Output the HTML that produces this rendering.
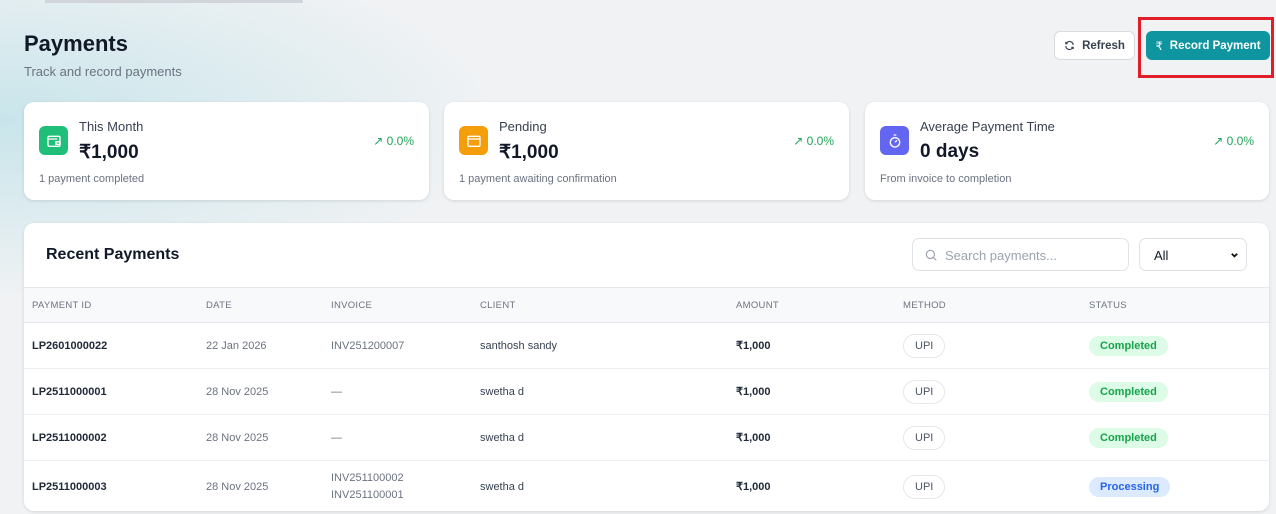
<!DOCTYPE html>
<html><head><meta charset="utf-8"><style>
*{box-sizing:border-box;margin:0;padding:0}
body{width:1276px;height:514px;overflow:hidden;font-family:"Liberation Sans",sans-serif;background:#f0f2f4;position:relative;color:#111827}
.bg{position:absolute;left:0;top:0;width:500px;height:300px;background:radial-gradient(ellipse at 0 40%,rgba(190,225,232,.8),rgba(240,242,244,0) 70%)}
.topbar{position:absolute;left:45px;top:0;width:258px;height:3px;background:#d1d5db}
.abs{position:absolute}
h1{position:absolute;left:24px;top:31px;font-size:22px;font-weight:bold;color:#111827}
.sub{left:24px;top:64px;font-size:13px;color:#6b7280}
.btn{position:absolute;border-radius:6px;font-size:11.5px;font-weight:bold;display:flex;align-items:center;justify-content:center;gap:7px}
.card{position:absolute;background:#fff;border-radius:10px;box-shadow:0 1px 3px rgba(0,0,0,.12)}
.ic{position:absolute;left:15px;top:24px;width:29px;height:29px;border-radius:6px;display:flex;align-items:center;justify-content:center}
.lbl{position:absolute;left:55px;top:17px;font-size:13px;color:#374151}
.val{position:absolute;left:55px;top:39px;font-size:19px;font-weight:bold;color:#111827}
.pct{position:absolute;right:15px;top:32px;font-size:12px;color:#22a55a}
.foot{position:absolute;left:15px;top:71px;font-size:11px;color:#6b7280}
table{position:absolute;left:0;top:64px;width:1245px;border-collapse:collapse;font-size:11px}
th{height:35px;background:#f8f9fb;text-align:left;font-weight:normal;color:#6b7280;font-size:9.5px;letter-spacing:.3px;padding-left:8px;border-top:1px solid #e5e7eb;border-bottom:1px solid #e5e7eb}
td{height:46px;padding-left:8px;border-bottom:1px solid #eceef1;color:#374151}
td.b{font-weight:bold;color:#1f2937}
td.g{color:#6b7280}
.upi{display:inline-block;border:1px solid #e5e7eb;border-radius:12px;padding:5px 11px;color:#4b5563;font-size:11px}
.st{display:inline-block;border-radius:10px;padding:4px 11px;font-weight:bold;font-size:11px}
.c{background:#dcfce7;color:#16a34a}.p{background:#dbeafe;color:#2563eb}
</style></head><body>
<div class="bg"></div><div class="topbar"></div>
<h1>Payments</h1>
<div class="abs sub">Track and record payments</div>
<div class="btn" style="left:1054px;top:31px;width:81px;height:29px;background:#fff;border:1px solid #d8dbe0;color:#374151">
<svg width="11" height="11" viewBox="0 0 24 24" fill="none" stroke="#374151" stroke-width="2.5"><path d="M20 11a8 8 0 0 0-14-5l-2 2M4 4v4h4M4 13a8 8 0 0 0 14 5l2-2M20 20v-4h-4"/></svg>Refresh</div>
<div class="abs" style="left:1138px;top:17px;width:136px;height:61px;border:3px solid #e11d2a"></div>
<div class="btn" style="left:1146px;top:31px;width:124px;height:29px;background:#0e959f;color:#fff"><span style="font-weight:normal">₹</span>Record Payment</div>

<div class="card" style="left:24px;top:102px;width:405px;height:98px">
<div class="ic" style="background:#1fbf7a"><svg width="16" height="16" viewBox="0 0 24 24" fill="none" stroke="#fff" stroke-width="2"><rect x="3" y="5" width="18" height="15" rx="2"/><path d="M3 9h14M15 13h6v4h-6z"/></svg></div>
<div class="lbl">This Month</div><div class="val">₹1,000</div><div class="pct">↗ 0.0%</div><div class="foot">1 payment completed</div></div>
<div class="card" style="left:444px;top:102px;width:405px;height:98px">
<div class="ic" style="background:#f59e0b"><svg width="16" height="16" viewBox="0 0 24 24" fill="none" stroke="#fff" stroke-width="2"><rect x="3" y="5" width="18" height="15" rx="2"/><path d="M3 9h18"/></svg></div>
<div class="lbl">Pending</div><div class="val">₹1,000</div><div class="pct">↗ 0.0%</div><div class="foot">1 payment awaiting confirmation</div></div>
<div class="card" style="left:865px;top:102px;width:404px;height:98px">
<div class="ic" style="background:#6366f1"><svg width="16" height="16" viewBox="0 0 24 24" fill="none" stroke="#fff" stroke-width="2"><circle cx="12" cy="14" r="7"/><path d="M10 3h4M12 14l3-3"/></svg></div>
<div class="lbl">Average Payment Time</div><div class="val">0 days</div><div class="pct">↗ 0.0%</div><div class="foot">From invoice to completion</div></div>

<div class="card" style="left:24px;top:223px;width:1245px;height:288px;overflow:hidden">
<div class="abs" style="left:22px;top:23px;font-size:16px;font-weight:bold">Recent Payments</div>
<div class="abs" style="left:888px;top:15px;width:217px;height:33px;border:1px solid #dfe2e6;border-radius:7px">
<svg class="abs" style="left:11px;top:9px" width="14" height="14" viewBox="0 0 24 24" fill="none" stroke="#9ca3af" stroke-width="2"><circle cx="11" cy="11" r="7"/><path d="M16 16l5 5"/></svg>
<div class="abs" style="left:32px;top:9px;font-size:13px;color:#9ca3af">Search payments...</div></div>
<div class="abs" style="left:1115px;top:15px;width:108px;height:33px;border:1px solid #dfe2e6;border-radius:7px">
<div class="abs" style="left:14px;top:9px;font-size:13px;color:#111827">All</div>
<svg class="abs" style="left:90px;top:12px" width="9" height="9" viewBox="0 0 10 10" fill="none" stroke="#111" stroke-width="2"><path d="M2 3l3 3 3-3"/></svg></div>
<table>
<tr><th style="width:174px">PAYMENT ID</th><th style="width:125px">DATE</th><th style="width:149px">INVOICE</th><th style="width:256px">CLIENT</th><th style="width:167px">AMOUNT</th><th style="width:186px">METHOD</th><th>STATUS</th></tr>
<tr><td class="b">LP2601000022</td><td class="g">22 Jan 2026</td><td class="g">INV251200007</td><td>santhosh sandy</td><td class="b">₹1,000</td><td><span class="upi">UPI</span></td><td><span class="st c">Completed</span></td></tr>
<tr><td class="b">LP2511000001</td><td class="g">28 Nov 2025</td><td class="g">—</td><td>swetha d</td><td class="b">₹1,000</td><td><span class="upi">UPI</span></td><td><span class="st c">Completed</span></td></tr>
<tr><td class="b">LP2511000002</td><td class="g">28 Nov 2025</td><td class="g">—</td><td>swetha d</td><td class="b">₹1,000</td><td><span class="upi">UPI</span></td><td><span class="st c">Completed</span></td></tr>
<tr><td class="b" style="height:52px">LP2511000003</td><td class="g">28 Nov 2025</td><td class="g" style="line-height:17px">INV251100002<br>INV251100001</td><td>swetha d</td><td class="b">₹1,000</td><td><span class="upi">UPI</span></td><td><span class="st p">Processing</span></td></tr>
</table></div>
</body></html>
